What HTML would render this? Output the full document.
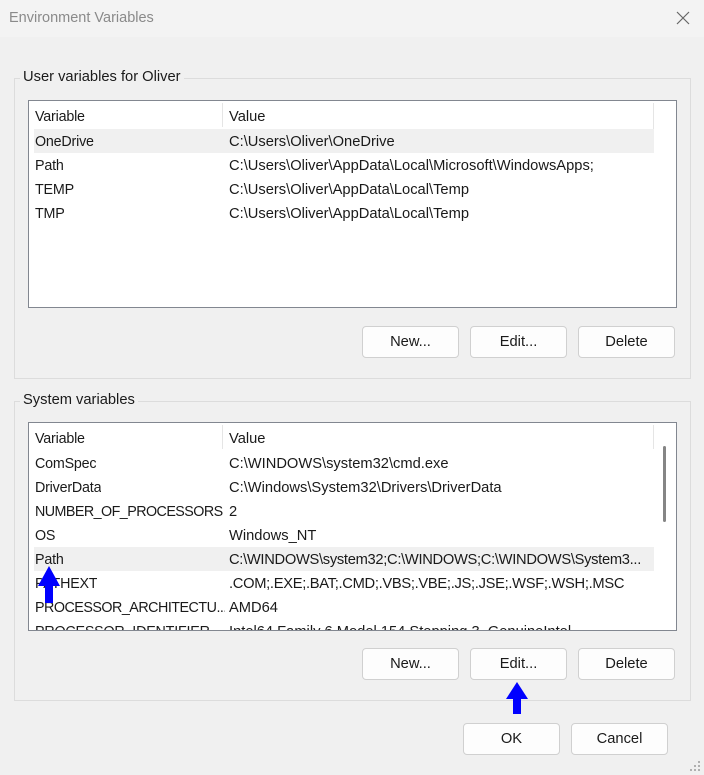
<!DOCTYPE html>
<html><head><meta charset="utf-8"><style>
*{margin:0;padding:0;box-sizing:border-box}
body{width:704px;height:775px;background:#f0f0f0;font-family:"Liberation Sans",sans-serif;font-size:14.7px;color:#1a1a1a;position:relative;overflow:hidden}
.abs{position:absolute}
.title{left:0;top:0;width:704px;height:37px;background:#f3f3f3}
.title span{position:absolute;left:9px;top:10px;color:#8a8a8a;font-size:14.5px}
.grp{border:1px solid #dcdcdc}
.legend{background:#f0f0f0;padding:0 3px;color:#1a1a1a}
.list{background:#fff;border:1px solid #828790;overflow:hidden}
.row{position:absolute;left:6px;height:24px;line-height:26px;white-space:nowrap;width:619px}
.k{position:absolute;left:0;top:0;font-size:14.3px;max-width:187px;overflow:hidden;letter-spacing:-0.2px}
.v{position:absolute;left:194px;top:0}
.btn{background:#fdfdfd;border:1px solid #d0d0d0;border-radius:4px;text-align:center;line-height:31px;height:32px;width:97px}
.sel{background:#f0f0f0;box-shadow:-1px 0 0 #f0f0f0}
</style></head><body>
<div class="abs title"><span>Environment Variables</span>
<svg class="abs" style="left:676px;top:11px" width="14" height="14"><path d="M1 1L13 13M13 1L1 13" stroke="#666" stroke-width="1.2"/></svg></div>

<div class="abs grp" style="left:14px;top:78px;width:677px;height:301px"></div>
<div class="abs legend" style="left:20px;top:69px">User variables for Oliver</div>
<div class="abs list" style="left:28px;top:100px;width:649px;height:208px">
 <div class="abs" style="left:193px;top:2px;width:1px;height:24px;background:#e5e5e5"></div>
 <div class="abs" style="left:624px;top:2px;width:1px;height:50px;background:#e5e5e5"></div>
 <div class="row" style="top:3px"><span class="k">Variable</span><span class="v">Value</span></div>
 <div class="row sel" style="top:28px"><span class="k">OneDrive</span><span class="v">C:\Users\Oliver\OneDrive</span></div>
 <div class="row" style="top:52px"><span class="k">Path</span><span class="v">C:\Users\Oliver\AppData\Local\Microsoft\WindowsApps;</span></div>
 <div class="row" style="top:76px"><span class="k">TEMP</span><span class="v">C:\Users\Oliver\AppData\Local\Temp</span></div>
 <div class="row" style="top:100px"><span class="k">TMP</span><span class="v">C:\Users\Oliver\AppData\Local\Temp</span></div>
</div>
<div class="abs btn" style="left:362px;top:326px">New...</div>
<div class="abs btn" style="left:470px;top:326px">Edit...</div>
<div class="abs btn" style="left:578px;top:326px">Delete</div>

<div class="abs grp" style="left:14px;top:401px;width:677px;height:300px"></div>
<div class="abs legend" style="left:20px;top:392px">System variables</div>
<div class="abs list" style="left:28px;top:422px;width:649px;height:209px">
 <div class="abs" style="left:193px;top:2px;width:1px;height:24px;background:#e5e5e5"></div>
 <div class="abs" style="left:624px;top:2px;width:1px;height:24px;background:#e5e5e5"></div>
 <div class="abs" style="left:634px;top:23px;width:3px;height:76px;background:#858585;border-radius:2px"></div>
 <div class="row" style="top:3px"><span class="k">Variable</span><span class="v">Value</span></div>
 <div class="row" style="top:28px"><span class="k">ComSpec</span><span class="v">C:\WINDOWS\system32\cmd.exe</span></div>
 <div class="row" style="top:52px"><span class="k">DriverData</span><span class="v">C:\Windows\System32\Drivers\DriverData</span></div>
 <div class="row" style="top:76px"><span class="k" style="letter-spacing:-0.55px;max-width:190px">NUMBER_OF_PROCESSORS</span><span class="v">2</span></div>
 <div class="row" style="top:100px"><span class="k">OS</span><span class="v">Windows_NT</span></div>
 <div class="row sel" style="top:124px;overflow:hidden"><span class="k">Path</span><span class="v" style="letter-spacing:-0.3px">C:\WINDOWS\system32;C:\WINDOWS;C:\WINDOWS\System3...</span></div>
 <div class="row" style="top:148px;overflow:hidden"><span class="k">PATHEXT</span><span class="v" style="letter-spacing:-0.3px">.COM;.EXE;.BAT;.CMD;.VBS;.VBE;.JS;.JSE;.WSF;.WSH;.MSC</span></div>
 <div class="row" style="top:172px"><span class="k" style="letter-spacing:-0.5px;max-width:190px">PROCESSOR_ARCHITECTU...</span><span class="v">AMD64</span></div>
 <div class="row" style="top:196px"><span class="k">PROCESSOR_IDENTIFIER</span><span class="v">Intel64 Family 6 Model 154 Stepping 3, GenuineIntel</span></div>
</div>
<div class="abs btn" style="left:362px;top:648px">New...</div>
<div class="abs btn" style="left:470px;top:648px">Edit...</div>
<div class="abs btn" style="left:578px;top:648px">Delete</div>

<div class="abs btn" style="left:463px;top:723px">OK</div>
<div class="abs btn" style="left:571px;top:723px">Cancel</div>

<svg class="abs" style="left:36px;top:565px" width="26" height="40"><path d="M13 1L2 21H9V38H17V21H24Z" fill="#0000ff"/></svg>
<svg class="abs" style="left:504px;top:682px" width="26" height="34"><path d="M13 0L2 17H9V32H17V17H24Z" fill="#0000ff"/></svg>
<svg class="abs" style="left:688px;top:759px" width="14" height="14" fill="#b0b0b0"><rect x="10" y="2" width="2" height="2"/><rect x="6" y="6" width="2" height="2"/><rect x="10" y="6" width="2" height="2"/><rect x="2" y="10" width="2" height="2"/><rect x="6" y="10" width="2" height="2"/><rect x="10" y="10" width="2" height="2"/></svg>
</body></html>
